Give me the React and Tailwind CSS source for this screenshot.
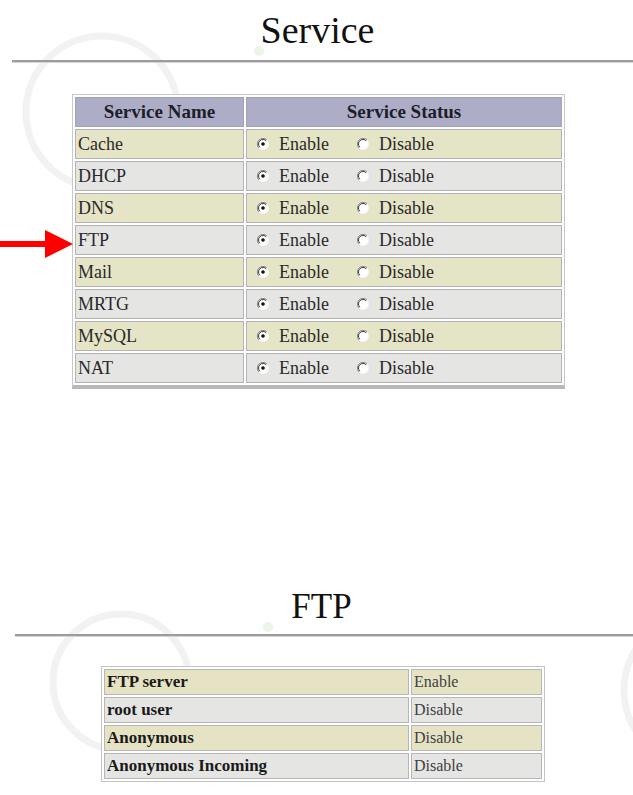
import React from 'react';

const services = ['Cache', 'DHCP', 'DNS', 'FTP', 'Mail', 'MRTG', 'MySQL', 'NAT'];

const ftpInfo = [
  { name: 'FTP server', value: 'Enable' },
  { name: 'root user', value: 'Disable' },
  { name: 'Anonymous', value: 'Disable' },
  { name: 'Anonymous Incoming', value: 'Disable' },
];

// classic sunken windows radio button
function Radio({ checked }) {
  return (
    <svg width="12" height="12" viewBox="0 0 12 12" className="shrink-0">
      <circle cx="6" cy="6" r="5.5" fill="#ffffff" />
      <path d="M10 2 A5.5 5.5 0 0 0 2 10" fill="none" stroke="#8a8a8a" strokeWidth="1" />
      <path d="M9.2 2.8 A4.5 4.5 0 0 0 2.8 9.2" fill="none" stroke="#3a3a3a" strokeWidth="1" />
      <path d="M2 10 A5.5 5.5 0 0 0 10 2" fill="none" stroke="#f4f4f4" strokeWidth="1" />
      {checked && <circle cx="6" cy="6" r="1.8" fill="#111111" />}
    </svg>
  );
}

function Watermark() {
  return (
    <svg className="absolute inset-0 pointer-events-none" width="633" height="795" viewBox="0 0 633 795">
      <circle cx="102" cy="112" r="76" fill="none" stroke="#f2f2f2" strokeWidth="7" />
      <circle cx="259" cy="51" r="5" fill="#ecf5e8" />
      <circle cx="121" cy="682" r="68" fill="none" stroke="#f2f2f2" strokeWidth="7" />
      <circle cx="268" cy="627" r="5" fill="#ecf5e8" />
      <circle cx="700" cy="690" r="76" fill="none" stroke="#f2f2f2" strokeWidth="7" />
    </svg>
  );
}

function Divider() {
  return <div className="h-[3px] border-t-2 border-b border-t-[#9c9c9c] border-b-[#d6d6d6]" />;
}

export default function App() {
  return (
    <div className="relative w-[633px] min-h-[795px] bg-white overflow-hidden font-['Liberation_Serif',serif] text-[#2a2a2a]">
      <Watermark />

      <div className="relative">
        {/* Service */}
        <h1 className="pt-[11px] text-center text-[38px] leading-[38px] text-[#111111] pl-[2px]">Service</h1>
        <div className="mt-[11px] ml-[12px]">
          <Divider />
        </div>

        <div className="relative ml-[72px] mt-[31px] w-[493px]">
          <div className="grid grid-cols-[169px_316px] gap-[2px] p-[2px] bg-white border border-[#c8c8c8] border-b-[4px] border-b-[#b8b8b8]">
            <div className="h-[30px] flex items-center justify-center bg-[#adadc8] border border-[#a2a2b8] font-bold text-[19px] text-[#1e1e28]">
              Service Name
            </div>
            <div className="h-[30px] flex items-center justify-center bg-[#adadc8] border border-[#a2a2b8] font-bold text-[19px] text-[#1e1e28]">
              Service Status
            </div>
            {services.map((s, i) => {
              const bg = i % 2 === 0 ? 'bg-[#e6e4c6]' : 'bg-[#e5e5e3]';
              return (
                <React.Fragment key={s}>
                  <div className={`h-[30px] flex items-center pl-[2px] text-[18px] border border-[#b4b4b4] ${bg}`}>{s}</div>
                  <div className={`h-[30px] flex items-center pl-[10px] text-[18px] border border-[#b4b4b4] ${bg}`}>
                    <div className="flex items-center gap-[10px] w-[100px]">
                      <Radio checked />
                      <span>Enable</span>
                    </div>
                    <div className="flex items-center gap-[10px]">
                      <Radio checked={false} />
                      <span>Disable</span>
                    </div>
                  </div>
                </React.Fragment>
              );
            })}
          </div>

          {/* pointer to the FTP row */}
          <svg className="absolute left-[-72px] top-[136px]" width="73" height="28" viewBox="0 0 73 28">
            <rect x="0" y="11" width="47" height="6" fill="#ff0000" />
            <polygon points="45,0 73,14 45,28" fill="#ff0000" />
          </svg>
        </div>

        {/* FTP */}
        <h2 className="mt-[200px] text-center text-[35px] leading-[35px] text-[#111111] pl-[10px]">FTP</h2>
        <div className="mt-[10px] ml-[15px]">
          <Divider />
        </div>

        <div className="ml-[101px] mt-[29px] w-[444px]">
          <div className="grid grid-cols-[305px_131px] gap-[2px] p-[2px] bg-white border border-[#c4c4c4]">
            {ftpInfo.map((row, i) => {
              const bg = i % 2 === 0 ? 'bg-[#e6e3c5]' : 'bg-[#e5e5e4]';
              return (
                <React.Fragment key={row.name}>
                  <div className={`h-[26px] flex items-center pl-[2px] font-bold text-[17px] text-[#1a1a1a] border border-[#b6b6b6] ${bg}`}>
                    {row.name}
                  </div>
                  <div className={`h-[26px] flex items-center pl-[2px] text-[16px] text-[#404040] border border-[#b6b6b6] ${bg}`}>
                    {row.value}
                  </div>
                </React.Fragment>
              );
            })}
          </div>
        </div>
      </div>
    </div>
  );
}
